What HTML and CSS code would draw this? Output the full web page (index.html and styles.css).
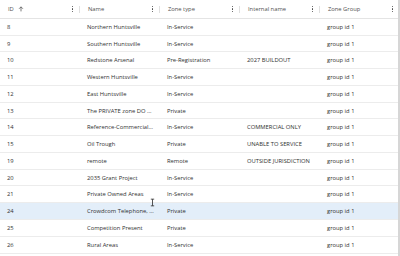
FILE: index.html
```html
<!DOCTYPE html>
<html lang="en">

<head>
  <meta charset="UTF-8">
  <meta name="viewport" content="width=device-width, initial-scale=1.0">
  <title>Zones</title>
  <link rel="stylesheet" href="styles.css">
</head>

<body>
  <div class="grid">
    <div class="header">
      <div class="col-head">
        <span class="title">ID</span>
        <svg class="sort" viewBox="0 0 10 10"><path d="M5 9V1.5M1.8 4.6L5 1.4l3.2 3.2" fill="none" stroke="#555" stroke-width="1.3"/></svg>
        <span class="menu"><i></i><i></i><i></i></span>
        <span class="sep"></span>
      </div>
      <div class="col-head">
        <span class="title">Name</span>
        <span class="menu"><i></i><i></i><i></i></span>
        <span class="sep"></span>
      </div>
      <div class="col-head">
        <span class="title">Zone type</span>
        <span class="menu"><i></i><i></i><i></i></span>
        <span class="sep"></span>
      </div>
      <div class="col-head">
        <span class="title">Internal name</span>
        <span class="menu"><i></i><i></i><i></i></span>
        <span class="sep"></span>
      </div>
      <div class="col-head">
        <span class="title">Zone Group</span>
        <span class="menu"><i></i><i></i><i></i></span>
      </div>
    </div>

    <div id="rows"></div>

    <svg class="cursor" viewBox="0 0 6 10"><path d="M1 1h4M3 1v8M1 9h4" fill="none" stroke="#333" stroke-width="1"/></svg>
  </div>

  <script>
    // Zone rows
    const zones = [
      [8, 'Northern Huntsville', 'In-Service', ''],
      [9, 'Southern Huntsville', 'In-Service', ''],
      [10, 'Redstone Arsenal', 'Pre-Registration', '2027 BUILDOUT'],
      [11, 'Western Huntsville', 'In-Service', ''],
      [12, 'East Huntsville', 'In-Service', ''],
      [13, 'The PRIVATE zone DO NOT USE', 'Private', ''],
      [14, 'Reference-Commercial-Zone', 'In-Service', 'COMMERCIAL ONLY'],
      [15, 'Oil Trough', 'Private', 'UNABLE TO SERVICE'],
      [19, 'remote', 'Remote', 'OUTSIDE JURISDICTION'],
      [20, '2035 Grant Project', 'In-Service', ''],
      [21, 'Private Owned Areas', 'In-Service', ''],
      [24, 'Crowdcom Telephone, LLC', 'Private', ''],
      [25, 'Competition Present', 'Private', ''],
      [26, 'Rural Areas', 'In-Service', '']
    ];

    const rowsElement = document.getElementById('rows');

    zones.forEach(function (zone) {
      const row = document.createElement('div');
      row.className = 'row' + (zone[0] === 24 ? ' selected' : '');
      const cells = [zone[0], zone[1], zone[2], zone[3], 'group id 1'];
      cells.forEach(function (value) {
        const cell = document.createElement('div');
        cell.className = 'cell';
        cell.textContent = value;
        row.appendChild(cell);
      });
      rowsElement.appendChild(row);
    });
  </script>
</body>

</html>
```

FILE: styles.css
```css
body {
  margin: 0;
  background-color: white;
  font-family: 'Open Sans', 'Liberation Sans', sans-serif;
  color: #303030;
}

.grid {
  position: relative;
  width: 398px;
  height: 256px;
  overflow: hidden;
  border-right: 2px solid #d6d6d6;
}

.header {
  display: grid;
  grid-template-columns: repeat(5, 80px);
  height: 18.8px;
  border-bottom: 1px solid #e4e4e4;
  box-sizing: border-box;
}

.col-head {
  position: relative;
  display: flex;
  align-items: center;
  padding: 0 7px 0 8px;
  font-size: 5.8px;
  color: #505050;
}

.sort {
  width: 6px;
  height: 6px;
  margin-left: 4px;
}

.menu {
  margin-left: auto;
  display: flex;
  flex-direction: column;
  gap: 1px;
}

.menu i {
  display: block;
  width: 1.3px;
  height: 1.3px;
  border-radius: 50%;
  background-color: #444;
}

.sep {
  position: absolute;
  right: 0;
  top: 6px;
  width: 1px;
  height: 7px;
  background-color: #e0e0e0;
}

.row {
  display: grid;
  grid-template-columns: repeat(5, 80px);
  height: 16.77px;
  border-bottom: 1px solid #ececec;
  box-sizing: border-box;
}

.row.selected {
  background-color: #e3eef9;
}

.cell {
  padding: 0 6px 0 7px;
  font-size: 5.8px;
  line-height: 16px;
  white-space: nowrap;
  overflow: hidden;
  text-overflow: ellipsis;
  min-width: 0;
}

.cursor {
  position: absolute;
  left: 150px;
  top: 198px;
  width: 5px;
  height: 9px;
}
```
